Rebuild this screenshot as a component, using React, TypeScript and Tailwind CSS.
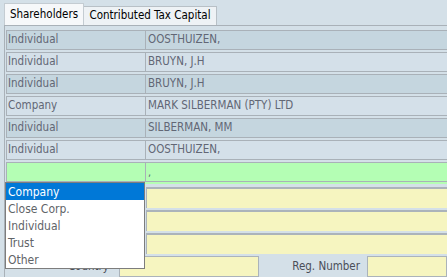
import React from "react";

interface IRow {
  type: string;
  name: string;
}

const rows: IRow[] = [
  { type: "Individual", name: "OOSTHUIZEN," },
  { type: "Individual", name: "BRUYN, J.H" },
  { type: "Individual", name: "BRUYN, J.H" },
  { type: "Company", name: "MARK SILBERMAN (PTY) LTD" },
  { type: "Individual", name: "SILBERMAN, MM" },
  { type: "Individual", name: "OOSTHUIZEN," },
];

const options = ["Company", "Close Corp.", "Individual", "Trust", "Other"];

const font = {
  fontFamily: '"DejaVu Sans Condensed", "DejaVu Sans", "Liberation Sans", sans-serif',
};

export default function App() {
  return (
    <div
      className="relative w-[447px] h-[277px] overflow-hidden bg-[#d4e0e8] text-[11px] leading-none"
      style={font}
    >
      {/* tabs */}
      <div className="flex items-end h-[25px] pl-[4px]">
        <div className="w-[80px] h-[22px] flex items-center justify-center bg-[#f6f8fa] border-t border-l border-r border-[#c4ccd2] text-black text-[11.5px]">
          Shareholders
        </div>
        <div className="w-[133px] h-[19px] flex items-center justify-center bg-[#eef2f5] border-t border-r border-[#b8c0c6] text-black text-[11.5px]">
          Contributed Tax Capital
        </div>
      </div>

      {/* panel */}
      <div className="ml-[4px] border-t border-l border-[#a9b1b8] h-[252px] pt-[4px] pl-[1px]">
        {rows.map((row, i) => (
          <div
            key={i}
            className={
              "flex h-[20px] mb-[2px] border-y border-l border-[#a9b1b8] text-[#626775] text-[11.5px] " +
              (i % 2 === 0 ? "bg-[#c5d6df]" : "bg-[#d4e0e9]")
            }
          >
            <div className="w-[139px] border-r border-[#a9b1b8] pl-[1px] flex items-center">
              {row.type}
            </div>
            <div className="flex-1 pl-[2px] flex items-center">{row.name}</div>
          </div>
        ))}

        <div className="bg-[#b4feb4] pb-[2px]">
          <div className="flex h-[20px] border-y border-l border-[#a9b1b8] text-[#626775]">
            <div className="w-[139px] border-r border-[#a9b1b8]" />
            <div className="flex-1 pl-[2px] flex items-center">,</div>
          </div>
        </div>

        <div className="mt-[3px] flex flex-col gap-[2px]">
          {[0, 1, 2].map((i) => (
            <div key={i} className="flex h-[21px]">
              <div className="w-[140px]" />
              <div className="flex-1 bg-[#f6f5c0] border-t-2 border-l border-[#abb3ba]" />
            </div>
          ))}
          <div className="flex h-[21px] items-center text-[#4a4e58] text-[11.5px]">
            <div className="w-[105px] text-right pr-[2px]">Country</div>
            <div className="ml-[8px] w-[140px] h-[21px] bg-[#f6f5c0] border border-[#abb3ba]" />
            <div className="w-[108px] text-right pr-[7px]">Reg. Number</div>
            <div className="flex-1 h-[21px] bg-[#f6f5c0] border border-[#abb3ba]" />
          </div>
        </div>
      </div>

      {/* open dropdown */}
      <div className="absolute left-[5px] top-[182px] w-[140px] h-[87px] bg-white border border-[#7d7d7d] text-[#5f6468] text-[12px]">
        {options.map((opt, i) => (
          <div
            key={opt}
            className={
              "h-[17px] pl-[2px] flex items-center " +
              (i === 0 ? "bg-[#0078d7] text-white" : "")
            }
          >
            {opt}
          </div>
        ))}
      </div>
    </div>
  );
}
